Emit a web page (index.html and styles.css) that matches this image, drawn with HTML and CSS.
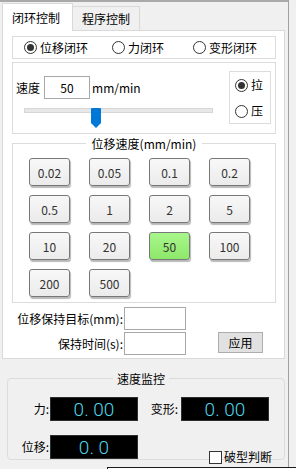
FILE: index.html
```html
<!DOCTYPE html>
<html lang="zh-CN">
<head>
    <meta charset="UTF-8">
    <meta name="viewport" content="width=device-width, initial-scale=1.0">
    <title>闭环控制</title>
    <link rel="stylesheet" href="styles.css">
</head>
<body>
    <div class="window">
        <div class="tab-bar">
            <div class="tab tab-active">闭环控制</div>
            <div class="tab">程序控制</div>
        </div>

        <div class="tab-pane">
            <!-- Control mode -->
            <div class="panel mode-panel">
                <label class="radio"><span class="radio-dot checked"></span>位移闭环</label>
                <label class="radio"><span class="radio-dot"></span>力闭环</label>
                <label class="radio"><span class="radio-dot"></span>变形闭环</label>
            </div>

            <!-- Speed + direction -->
            <div class="panel speed-panel">
                <div class="speed-main">
                    <div class="speed-row">
                        <span>速度</span>
                        <input type="text" class="text-box speed-input" value="50">
                        <span>mm/min</span>
                    </div>
                    <div class="slider">
                        <div class="slider-track"></div>
                        <svg class="slider-thumb" style="left: 67px" width="10" height="20" viewBox="0 0 10 20">
                            <path d="M1 0H9a1 1 0 0 1 1 1V15L5 20L0 15V1a1 1 0 0 1 1-1Z" fill="#0078d7"/>
                        </svg>
                    </div>
                </div>
                <div class="panel dir-panel">
                    <label class="radio"><span class="radio-dot checked"></span>拉</label>
                    <label class="radio"><span class="radio-dot"></span>压</label>
                </div>
            </div>

            <!-- Preset speeds -->
            <fieldset class="group rate-group">
                <legend>位移速度(mm/min)</legend>
                <div class="rate-grid">
                    <button class="rate-btn">0.02</button>
                    <button class="rate-btn">0.05</button>
                    <button class="rate-btn">0.1</button>
                    <button class="rate-btn">0.2</button>
                    <button class="rate-btn">0.5</button>
                    <button class="rate-btn">1</button>
                    <button class="rate-btn">2</button>
                    <button class="rate-btn">5</button>
                    <button class="rate-btn">10</button>
                    <button class="rate-btn">20</button>
                    <button class="rate-btn rate-active">50</button>
                    <button class="rate-btn">100</button>
                    <button class="rate-btn">200</button>
                    <button class="rate-btn">500</button>
                </div>
            </fieldset>

            <!-- Hold settings -->
            <div class="hold-form">
                <span class="form-label">位移保持目标(mm):</span>
                <input type="text" class="text-box hold-input">
                <span></span>
                <span class="form-label">保持时间(s):</span>
                <input type="text" class="text-box hold-input">
                <button class="apply-btn">应用</button>
            </div>
        </div>

        <!-- Live readings -->
        <fieldset class="group monitor-group">
            <legend>速度监控</legend>
            <div class="monitor-grid">
                <span class="monitor-label">力:</span>
                <div class="lcd">0. 00</div>
                <span class="monitor-label">变形:</span>
                <div class="lcd">0. 00</div>
                <span class="monitor-label">位移:</span>
                <div class="lcd">0. 0</div>
                <span></span>
                <label class="check"><span class="check-box"></span>破型判断</label>
            </div>
        </fieldset>
    </div>

    <div class="popup-edge"></div>
</body>
</html>
```

FILE: styles.css
```css
/* Base */
* {
    box-sizing: border-box;
}

body {
    margin: 0;
    width: 296px;
    height: 469px;
    overflow: hidden;
    position: relative;
    background-color: #f0f0f0;
    font-family: "Noto Sans CJK SC", "Noto Sans", sans-serif;
    font-size: 12px;
    line-height: 16px;
    color: #000;
}

.window {
    width: 289px;
    height: 469px;
    border-top: 2px solid #a9a9a9;
    border-right: 1px solid #a0a0a0;
}

/* Tabs */
.tab-bar {
    display: flex;
    align-items: flex-end;
    padding: 1px 0 0 2px;
}

.tab {
    display: flex;
    align-items: center;
    width: 67px;
    height: 24px;
    padding-left: 9px;
    border: 1px solid #d9d9d9;
    border-left: none;
    border-bottom: none;
    background-color: #f0f0f0;
}

.tab-active {
    position: relative;
    z-index: 1;
    width: 71px;
    height: 28px;
    margin-bottom: -1px;
    border-left: 1px solid #d9d9d9;
    background-color: #fff;
}

.tab-pane {
    width: 283px;
    margin-left: 2px;
    padding: 5px 8px 3px 9px;
    border: 1px solid #d9d9d9;
    background-color: #fff;
}

/* Boxes */
.panel {
    border: 1px solid #dcdcdc;
    background-color: #fff;
}

.radio {
    display: flex;
    align-items: center;
    gap: 3px;
    white-space: nowrap;
}

.radio-dot {
    display: flex;
    align-items: center;
    justify-content: center;
    flex-shrink: 0;
    width: 13px;
    height: 13px;
    border: 1px solid #333;
    border-radius: 50%;
    background-color: #fff;
}

.radio-dot.checked::after {
    content: "";
    width: 7px;
    height: 7px;
    border-radius: 50%;
    background-color: #333;
}

.mode-panel {
    display: grid;
    grid-template-columns: 88px 81px auto;
    align-items: center;
    height: 23px;
    padding-left: 11px;
}

.speed-panel {
    display: flex;
    align-items: flex-start;
    margin-top: 3px;
    padding: 8px 4px 5px 3px;
}

.speed-main {
    flex: 1;
    padding-top: 5px;
}

.speed-row {
    display: flex;
    align-items: center;
}

.text-box {
    height: 23px;
    padding: 0;
    border: 1px solid #a8a8a8;
    background-color: #fff;
    font-family: inherit;
    font-size: 12px;
    color: #000;
    outline: none;
}

.speed-input {
    width: 46px;
    margin: 0 2px 0 4px;
    text-align: center;
}

.slider {
    position: relative;
    width: 189px;
    height: 20px;
    margin: 9px 0 0 8px;
}

.slider-track {
    height: 5px;
    margin-top: 9px;
    border: 1px solid #d6d6d6;
    background-color: #e7e7e7;
}

.slider-thumb {
    position: absolute;
    top: 0;
}

.dir-panel {
    display: flex;
    flex-direction: column;
    gap: 6px;
    flex-shrink: 0;
    width: 42px;
    height: 53px;
    margin-left: auto;
    padding: 3px 0 0 5px;
}

.dir-panel .radio {
    height: 20px;
}

/* Group boxes */
.group {
    min-width: 0;
    margin: 0;
    border: 1px solid #dcdcdc;
}

.group legend {
    line-height: 15px;
}

.rate-group {
    margin-top: 2px;
    padding: 7px 0 5px;
}

.rate-group legend {
    margin: 0 auto;
    padding: 0 6px;
}

.rate-grid {
    display: grid;
    grid-template-columns: repeat(4, 41px);
    grid-auto-rows: 28px;
    column-gap: 19px;
    row-gap: 9px;
    padding-left: 16px;
}

.rate-btn {
    padding: 0;
    border: 1px solid #777;
    border-radius: 3px;
    background: linear-gradient(#f8f8f8, #ebebeb);
    box-shadow: 1px 2px 1px rgba(0, 0, 0, 0.28);
    font-family: inherit;
    font-size: 12px;
    color: #333;
}

.rate-active {
    background: linear-gradient(#a9f68c, #8de86a);
}

/* Hold form */
.hold-form {
    display: grid;
    grid-template-columns: 111px 62px auto;
    column-gap: 1px;
    row-gap: 2px;
    align-items: center;
    margin-top: 4px;
}

.form-label {
    text-align: right;
    white-space: nowrap;
}

.hold-input {
    width: 62px;
}

.apply-btn {
    align-self: start;
    width: 45px;
    height: 21px;
    margin-left: 31px;
    padding: 0;
    border: 1px solid #adadad;
    background-color: #e1e1e1;
    font-family: inherit;
    font-size: 12px;
    color: #000;
}

/* Monitor */
.monitor-group {
    width: 278px;
    margin: 12px 0 0 7px;
    padding: 11px 0 0;
    border-radius: 4px;
}

.monitor-group legend {
    margin-left: 105px;
    padding: 0 4px;
}

.monitor-grid {
    display: grid;
    grid-template-columns: 42px 88px 43px 88px;
    grid-auto-rows: 24px;
    row-gap: 14px;
    align-items: center;
}

.monitor-label {
    text-align: right;
    padding-right: 1px;
    white-space: nowrap;
}

.monitor-label:nth-child(3) {
    padding-right: 3px;
}

.lcd {
    height: 24px;
    border: 1px solid #2e2e2e;
    background-color: #000;
    font-family: Roboto, "Noto Sans", sans-serif;
    font-weight: 300;
    font-size: 19px;
    line-height: 24px;
    color: #4fd6e8;
    text-align: center;
    white-space: pre;
}

.check {
    display: flex;
    align-items: center;
    gap: 2px;
    align-self: start;
    justify-self: start;
    width: 70px;
    margin: 14px 0 0 28px;
    white-space: nowrap;
}

.check-box {
    flex-shrink: 0;
    width: 13px;
    height: 13px;
    border: 1px solid #333;
    background-color: #fff;
}

/* Edge of an overlapping popup */
.popup-edge {
    position: absolute;
    left: 107px;
    top: 467px;
    width: 189px;
    height: 10px;
    border-top: 1px solid #1a1a1a;
    border-left: 1px solid #1a1a1a;
    background-color: #fff;
}
```
